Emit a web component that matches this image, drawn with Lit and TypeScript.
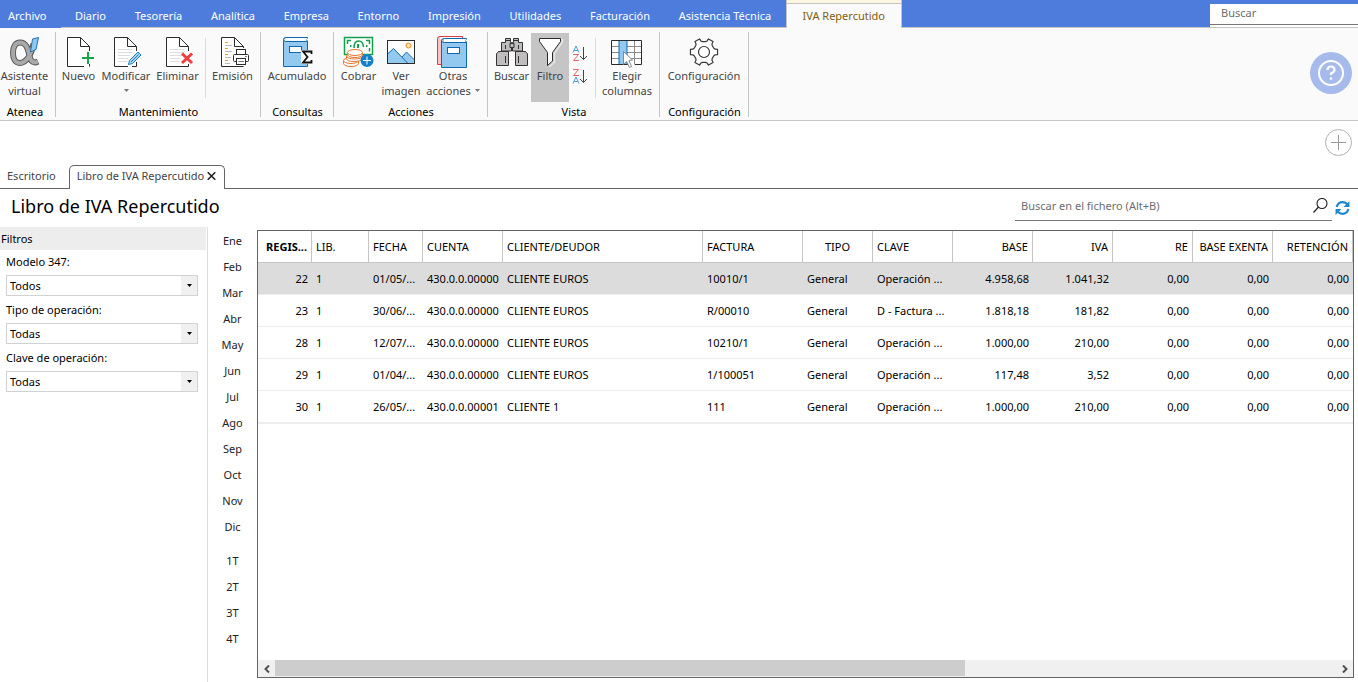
import { LitElement, html, css, svg } from "lit";
import { customElement, property, state } from "lit/decorators.js";
import { classMap } from "lit/directives/class-map.js";

const docShape = svg`
  <path d="M4.5 1.5H17.5L26.5 10.5V30.5H4.5Z" fill="#fff"/>
  <path d="M17.5 1.5V10.5H26.5" fill="none" stroke="#2b2b2b"/>`;
const docLines = svg`<path d="M8 13.5H22M8 16.5H22M8 19.5H20M8 22.5H18M8 25.5H17" stroke="#dcdcdc"/>`;

/* Outline of a six-toothed cog around (16, 16). */
const cog = (() => {
  const points: string[] = [];
  for (let tooth = 0; tooth < 6; tooth++) {
    for (const [offset, r] of [[-21, 10.5], [-14, 11.5], [-11, 13.8], [11, 13.8], [14, 11.5], [21, 10.5]]) {
      const a = ((tooth * 60 + offset) * Math.PI) / 180;
      points.push(`${(16 + r * Math.cos(a)).toFixed(2)} ${(16 + r * Math.sin(a)).toFixed(2)}`);
    }
  }
  return `M${points.join("L")}Z`;
})();

const alphaPath = "M24.5 7.500C23 17 18 27 10.500 27C6.500 27 4 23 4 17C4 10.500 6.500 6.500 11 6.500C18 6.500 19 14 21 21.500C22.200 26 25 27.500 29 25.500";

const icons: Record<string, unknown> = {
  alpha: svg`
    <path d=${alphaPath} fill="none" stroke="#5a5a5a" stroke-width="6"/>
    <path d=${alphaPath} fill="none" stroke="#a9a9a9" stroke-width="4"/>
    <path d="M23.500 3L29.500 1.500L27 13.500L21.500 16Z" fill="#8fc6f0" stroke="#1f74b8"/>`,
  nuevo: svg`
    <path d="M4.500 1.500H17.500L26.500 10.500V30.500H4.500Z" fill="#fff"/>
    <path d="M21 30.500H4.500V1.500H17.500L26.500 10.500V15M17.500 1.500V10.500H26.500M26.500 28V30.500" fill="none" stroke="#2b2b2b"/>
    <path d="M19 22H31M25 16V28" stroke="#14a84b" stroke-width="2"/>`,
  modificar: svg`
    <path d="M4.500 1.500H17.500L26.500 10.500V30.500H4.500Z" fill="#fff"/>${docLines}
    <path d="M18 30.500H4.500V1.500H17.500L26.500 10.500V15M17.500 1.500V10.500H26.500M26.500 26V30.500H22" fill="none" stroke="#2b2b2b"/>
    <path d="M18.500 28.500L19.500 24.500L28 16L31 19L22.500 27.500Z" fill="#a5d3f5" stroke="#1f7fc4" stroke-linejoin="round"/>
    <path d="M21 26L28.500 18.500" stroke="#1f7fc4"/>`,
  eliminar: svg`
    <path d="M4.500 1.500H17.500L26.500 10.500V30.500H4.500Z" fill="#fff"/>${docLines}
    <path d="M26.500 15V10.500L17.500 1.500H4.500V30.500H26.500V28M17.500 1.500V10.500H26.500" fill="none" stroke="#2b2b2b"/>
    <path d="M20 17.500L30 27M30 17.500L20 27" stroke="#ef3e3e" stroke-width="3"/>`,
  emision: svg`${docShape}
    <path d="M26.500 30.500H4.500V1.500H17.500L26.500 10.500V12" fill="none" stroke="#2b2b2b"/>
    <path d="M8 6.500H11M8 12.500H11M8 18.500H11M8 24.500H11" stroke="#f39a1e"/>
    <path d="M8 9.500H15M8 15.500H15M8 21.500H14M8 27.500H13" stroke="#bbb"/>
    <rect x="16.500" y="18.500" width="15" height="7" rx="1" fill="#fff" stroke="#2b2b2b"/>
    <rect x="19.500" y="13.500" width="9" height="5" fill="#fff" stroke="#2b2b2b"/>
    <rect x="19.500" y="22.500" width="9" height="6" fill="#fff" stroke="#2b2b2b"/>
    <path d="M21.500 25.500H27M28 20.500H30" stroke="#777"/>`,
  acumulado: svg`
    <path d="M2.500 3.500V30.500H26.500V5.500H5Q2.500 5.500 2.500 3.500T5 1.500H26.500L25.500 3.500L26.500 5.500" fill="#94c9ef" stroke="#1068b0"/>
    <path d="M4.500 2H26L25 5H4.500Z" fill="#fff"/>
    <rect x="8.500" y="10.500" width="12" height="6" fill="#fff" stroke="#1068b0"/>
    <path d="M20 14H32V28H20Z" fill="#fafafa"/>
    <path d="M30.500 18V15.500H22L26.500 21L22 26.500H30.500V24" fill="none" stroke="#111" stroke-width="1.800"/>`,
  cobrar: svg`
    <rect x="1.500" y="1.500" width="28" height="17" fill="#fff" stroke="#11a14a" stroke-width="1.500"/>
    <path d="M4.500 8V4.500H8M23 4.500H26.500V8M26.500 12V15.500" fill="none" stroke="#11a14a" stroke-width="1.500"/>
    <path d="M11 12Q11 5 15.500 5T20.500 11" fill="none" stroke="#11a14a" stroke-width="1.500"/>
    <path d="M7 10H8.500M23 10H24.500M15 8V12" stroke="#11a14a" stroke-width="2"/>
    <g fill="#fff" stroke="#e8762d">
      <path d="M.5 24.500V27.500Q1.500 30.500 8 30.500T15.500 27.500V24.500"/><ellipse cx="8" cy="24.500" rx="7.500" ry="3"/>
      <path d="M3.500 20V22.500Q4 25.500 11 25.500T19.500 22.500V20"/><ellipse cx="11.500" cy="20" rx="8" ry="3"/>
      <path d="M4.500 16.500V18.500Q5.500 21.500 12 21.500T19.500 18.500V16.500"/><ellipse cx="12" cy="16.500" rx="7.500" ry="3"/>
    </g>
    <circle cx="24" cy="24.500" r="6.500" fill="#157fcb"/>
    <path d="M20 24.500H28M24 20.500V28.500" stroke="#fff"/>`,
  imagen: svg`
    <rect x="2.500" y="4.500" width="27" height="23" fill="#fff"/>
    <path d="M3 17.500L8.500 12.500L17 21L21.500 16L29 24V27H3Z" fill="#94c9ef"/>
    <path d="M3 17.500L8.500 12.500L22.500 27M17 21L21.500 16L29.500 24" fill="none" stroke="#1068b0"/>
    <circle cx="23.500" cy="9.500" r="2.500" fill="#ffe3a8" stroke="#ee8a2c"/>
    <rect x="2.500" y="4.500" width="27" height="23" fill="none" stroke="#2b2b2b"/>`,
  otras: svg`
    <path d="M25.500 .5H3Q.5 .5 .5 2.500V28.500H8V4H25.500Z" fill="#f8c3c3" stroke="#e23a42"/>
    <path d="M3 1H25V3.500H3Z" fill="#fff"/>
    <path d="M4.500 4.500V31.500H29.500V6.500H7.500Q4.500 6.500 4.500 4.500T7.500 2.500H29.500L28.500 4.500L29.500 6.500" fill="#94c9ef" stroke="#1068b0"/>
    <path d="M7 3H29L28 6H7Z" fill="#fff"/>
    <rect x="10.500" y="11.500" width="12" height="6" fill="#fff" stroke="#1068b0"/>`,
  buscar: svg`
    <g fill="#bfbdbd" stroke="#333">
      <path d="M5.500 15V6.500H9.500V2.500H14.500V6.500H15.500V15ZM16.500 15V6.500H17.500V2.500H22.500V6.500H26.500V15Z"/>
      <path d="M2.500 15.500H12.500V29.500H.5V18ZM19.500 15.500H29.500L31.500 18V29.500H19.500Z"/>
      <path d="M14 7.500H18V11.500H14Z"/>
    </g>
    <path d="M9.500 9V13M22.500 9V13M9.500 20V27M22.500 20V27M10 4.500H14M18 4.500H22" stroke="#333"/>`,
  filtro: svg`
    <path d="M5.500 3.500H28.500V6L20.500 17V26.500L15 31" fill="none" stroke="#e6e6e6" stroke-width="1.500"/>
    <path d="M5.500 2.500H26.500V5.500L18.500 16.500V25L13.500 29.500V16.500L5.500 5.500Z" fill="#fff" stroke="#2b2b2b"/>`,
  elegir: svg`
    <rect x="1" y="4.500" width="30" height="24" fill="#fff"/>
    <path d="M.5 10.500H30.500M.5 16.500H30.500M.5 22.500H30.500M15.500 4.500V28.500M23.500 4.500V28.500" stroke="#8b8b8b"/>
    <rect x="8" y="4.500" width="8" height="24" fill="#94c9ef"/>
    <path d="M8 4V29M16 4V29" stroke="#1068b0"/>
    <path d="M18 28.500H.5V4.500H30.500V28.500H24" fill="none" stroke="#2b2b2b"/>
    <path d="M12.500 15.500V28.500L15.500 25.500L18.500 31.500L20.500 30.500L18 24.500L21.500 24Z" fill="#fff" stroke="#888" stroke-linejoin="round"/>`,
  config: svg`
    <path d=${cog} fill="#fff" stroke="#3a3a3a" stroke-width="1.200" stroke-linejoin="round"/>
    <circle cx="16" cy="16" r="5.500" fill="none" stroke="#3a3a3a" stroke-width="1.200"/>`,
};

interface Action {
  icon: string;
  lines: string[];
  arrow?: boolean;
  on?: boolean;
}

@customElement("ribbon-button")
class RibbonButton extends LitElement {
  @property({ attribute: false }) action!: Action;

  static styles = css`
    :host { display: flex; }
    button {
      display: flex; flex-direction: column; align-items: center; flex: 1;
      height: 69px; padding: 3px 0 0; border: 0; background: none;
      font: 11px/15px "Noto Sans", "Open Sans", sans-serif; color: #444; white-space: nowrap;
    }
    button:hover { background: #e8e8e8; }
    .on, .on:hover { background: #c5c5c5; }
    svg { display: block; flex: none; }
    .text { display: flex; align-items: center; height: 15px; }
    .arrow { margin-left: 4px; }
    .alone { margin-left: 0; }
  `;

  render() {
    const a = this.action;
    const last = a.lines.length - 1;
    const arrow = (alone: boolean) =>
      html`<svg class=${classMap({ arrow: true, alone })} width="5" height="3" viewBox="0 0 5 3"><path d="M0 0H5L2.500 3Z" fill="#777" /></svg>`;
    return html`<button class=${classMap({ on: !!a.on })}>
      <svg width="32" height="32" viewBox="0 0 32 32">${icons[a.icon]}</svg>
      ${a.lines.map((l, i) => html`<span class="text">${l}${a.arrow && last > 0 && i === last ? arrow(false) : ""}</span>`)}
      ${a.arrow && last === 0 ? html`<span class="text">${arrow(true)}</span>` : ""}
    </button>`;
  }
}

const menu = ["Diario", "Tesorería", "Analítica", "Empresa", "Entorno", "Impresión", "Utilidades", "Facturación", "Asistencia Técnica"];
const months = ["Ene", "Feb", "Mar", "Abr", "May", "Jun", "Jul", "Ago", "Sep", "Oct", "Nov", "Dic"];
const quarters = ["1T", "2T", "3T", "4T"];
const filters = [
  { id: "modelo", label: "Modelo 347:", value: "Todos" },
  { id: "tipo", label: "Tipo de operación:", value: "Todas" },
  { id: "clave", label: "Clave de operación:", value: "Todas" },
];
const columns = [
  { title: "REGIS...", width: 54, align: "right strong" },
  { title: "LIB.", width: 57, align: "" },
  { title: "FECHA", width: 54, align: "" },
  { title: "CUENTA", width: 80, align: "" },
  { title: "CLIENTE/DEUDOR", width: 200, align: "" },
  { title: "FACTURA", width: 100, align: "" },
  { title: "TIPO", width: 70, align: "mid" },
  { title: "CLAVE", width: 80, align: "" },
  { title: "BASE", width: 80, align: "right" },
  { title: "IVA", width: 80, align: "right" },
  { title: "RE", width: 80, align: "right" },
  { title: "BASE EXENTA", width: 80, align: "right" },
  { title: "RETENCIÓN", width: 80, align: "right" },
];
const rows = [
  ["22", "1", "01/05/...", "430.0.0.00000", "CLIENTE EUROS", "10010/1", "General", "Operación ...", "4.958,68", "1.041,32", "0,00", "0,00", "0,00"],
  ["23", "1", "30/06/...", "430.0.0.00000", "CLIENTE EUROS", "R/00010", "General", "D - Factura ...", "1.818,18", "181,82", "0,00", "0,00", "0,00"],
  ["28", "1", "12/07/...", "430.0.0.00000", "CLIENTE EUROS", "10210/1", "General", "Operación ...", "1.000,00", "210,00", "0,00", "0,00", "0,00"],
  ["29", "1", "01/04/...", "430.0.0.00000", "CLIENTE EUROS", "1/100051", "General", "Operación ...", "117,48", "3,52", "0,00", "0,00", "0,00"],
  ["30", "1", "26/05/...", "430.0.0.00001", "CLIENTE 1", "111", "General", "Operación ...", "1.000,00", "210,00", "0,00", "0,00", "0,00"],
];

@customElement("app-root")
class AppRoot extends LitElement {
  @state() private selected = 0;

  static styles = css`
    :host {
      display: flex; flex-direction: column; min-height: 100vh; background: #fff;
      font: 11px/15px "Noto Sans", "Open Sans", sans-serif; color: #000;
    }
    *, *::before, *::after { box-sizing: border-box; }
    button, input, select { font: inherit; color: inherit; border: 0; background: none; padding: 0; margin: 0; border-radius: 0; }
    a { color: inherit; text-decoration: none; }
    input { outline: 0; min-width: 0; }
    input::placeholder { color: #6d6d6d; opacity: 1; }
    svg { display: block; flex: none; }

    .menubar { display: flex; height: 28px; background: #4d7cdc; border-bottom: 1px solid #c5c5c5; color: #fff; text-align: center; white-space: nowrap; }
    .menubar a { padding-top: 8px; }
    .menubar .file { height: 28px; padding: 8px 14px 0 8px; background: #4d7cdc; }
    .menu { display: flex; width: 725px; }
    .menu a { flex: 1 0 auto; padding: 8px 14px 0; }
    .menubar .current { height: 28px; padding: 8px 16px 0; color: #80600f; background: #fafafa; border: solid #c5c5c5; border-width: 0 1px; box-shadow: inset 0 3px #fdf6e0, inset 0 4px #c5c5c5; }
    .find { margin: 4px 0 0 auto; width: 148px; background: #fff; height: 23px; }
    .find input { display: block; width: 100%; height: 21px; padding: 0 11px 4px; border-bottom: 1px solid #767676; }

    .ribbon { display: flex; height: 93px; padding: 4px 0 3px; background: #fafafa; border-bottom: 1px solid #c5c5c5; }
    .group { display: flex; flex-direction: column; border-right: 1px solid #c5c5c5; padding-top: 1px; }
    .group:first-child { padding-right: 6px; }
    .tools { display: flex; flex: 1; justify-content: center; }
    .tools i { width: 1px; height: 60px; margin: 5px 3px 0 4px; background: #dcdcdc; }
    .caption { text-align: center; height: 15px; margin-bottom: -2px; padding-left: 1px; }
    .sorts { display: flex; flex-direction: column; width: 22px; padding: 12px 0 0 3px; gap: 5px; }
    .help { align-self: center; margin: 0 6px 4px auto; border-radius: 50%; }

    .docbar { display: flex; align-items: flex-end; height: 68px; border-bottom: 1px solid #646464; color: #444; }
    .docbar .tab { height: 23px; padding: 3px 13px 0 7px; }
    .docbar .open { display: flex; align-items: flex-start; gap: 3px; height: 24px; margin-bottom: -1px; padding: 2px 8px 0 7px; background: #fff; border: 1px solid #646464; border-bottom: 0; border-radius: 5px 5px 0 0; }
    .docbar .open svg { margin-top: 4px; }
    .docbar .add { margin: 0 6px 32px auto; }

    .head { display: flex; align-items: flex-start; height: 38px; padding-right: 8px; }
    h1 { margin: 5px 0 0 11px; font-size: 18px; line-height: 24px; font-weight: 400; }
    .search { display: flex; align-items: center; width: 317px; height: 32px; margin-left: auto; padding: 2px 4px 0 6px; border-bottom: 1px solid #767676; }
    .search input { flex: 1; height: 20px; padding-bottom: 1px; }
    .refresh { margin: 12px 0 0 3px; }

    .work { display: flex; flex: 1; }
    .filters { width: 208px; border-right: 1px solid #dcdcdc; padding-right: 1px; }
    h2 { margin: 0; padding: 4px 1px; font-size: 11px; line-height: 15px; font-weight: 400; background: #ededed; }
    .field { display: flex; flex-direction: column; gap: 1px; padding: 0 8px 2px 6px; }
    .field label { line-height: 24px; }
    .combo { display: grid; }
    .combo > * { grid-area: 1 / 1; }
    .combo select { appearance: none; height: 21px; border: 1px solid #d2d2d2; padding: 0 20px 0 3px; background: linear-gradient(#f0f0f0, #f0f0f0) right / 16px no-repeat #fff; }
    .combo svg { justify-self: end; align-self: center; margin-right: 6px; pointer-events: none; }
    .periods { display: flex; flex-direction: column; width: 49px; color: #222; }
    .periods button { height: 26px; }
    .periods .first { margin-top: 8px; }

    .grid { display: flex; flex-direction: column; flex: 1; min-width: 0; margin: 3px 4px 4px 0; border: 1px solid #646464; }
    .scroll { flex: 1; overflow: hidden; }
    table { width: 100%; table-layout: fixed; border-collapse: separate; border-spacing: 0; border-bottom: 1px solid #eee; }
    th, td { height: 32px; padding: 0 4px; text-align: left; font-weight: 400; white-space: nowrap; line-height: 16px; border-bottom: 1px solid #eee; }
    th { border-right: 1px solid #c5c5c5; border-bottom-color: #c5c5c5; }
    td { padding-right: 0; }
    td.right { padding-right: 4px; }
    th.right, td.right { text-align: right; }
    th.mid { text-align: center; }
    th.strong { font-weight: 700; }
    .selected td { background: #dcdcdc; }
    .hbar { display: flex; height: 17px; background: #f0f0f0; }
    .hbar button { display: grid; place-items: center; width: 17px; }
    .track { flex: 1; }
    .thumb { width: 65%; height: 16px; background: #cdcdcd; }
  `;

  private tool(icon: string, size: number, lines: string[], extra: Partial<Action> = {}) {
    const action: Action = { icon, lines, ...extra };
    return html`<ribbon-button style="width:${size}px" .action=${action}></ribbon-button>`;
  }

  private group(caption: string, width: number, tools: unknown) {
    return html`<section class="group" style="width:${width}px">
      <div class="tools">${tools}</div>
      <div class="caption">${caption}</div>
    </section>`;
  }

  private sortIcon(desc: boolean) {
    const a = (y: number) => svg`<path d="M1 ${y + 6.5}L4 ${y}L7 ${y + 6.5}M2 ${y + 4.5}H6" fill="none" stroke="#4a9fd8" />`;
    const z = (y: number) => svg`<path d="M1 ${y + 0.5}H6.500L1.500 ${y + 6.5}H7" fill="none" stroke="#e8666a" />`;
    return html`<button aria-label=${desc ? "Orden descendente" : "Orden ascendente"}>
      <svg width="17" height="18" viewBox="0 0 17 18">
        ${desc ? [z(1), a(9)] : [a(1), z(9)]}
        <path d="M11.500 2V14.500M8 11L11.500 14.500L15 11" fill="none" stroke="#444" />
      </svg>
    </button>`;
  }

  render() {
    return html`
      <nav class="menubar">
        <a class="file" href="#">Archivo</a>
        <div class="menu">${menu.map((m) => html`<a href="#">${m}</a>`)}</div>
        <a class="current" href="#">IVA Repercutido</a>
        <div class="find"><input type="text" placeholder="Buscar" aria-label="Buscar" /></div>
      </nav>

      <div class="ribbon">
        ${this.group("Atenea", 56, this.tool("alpha", 49, ["Asistente", "virtual"]))}
        ${this.group("Mantenimiento", 205, html`
          ${this.tool("nuevo", 38, ["Nuevo"])}
          ${this.tool("modificar", 57, ["Modificar"], { arrow: true })}
          ${this.tool("eliminar", 46, ["Eliminar"])}
          <i></i>
          ${this.tool("emision", 48, ["Emisión"])}`)}
        ${this.group("Consultas", 73, this.tool("acumulado", 62, ["Acumulado"]))}
        ${this.group("Acciones", 154, html`
          ${this.tool("cobrar", 43, ["Cobrar"])}
          ${this.tool("imagen", 42, ["Ver", "imagen"])}
          ${this.tool("otras", 62, ["Otras", "acciones"], { arrow: true })}`)}
        ${this.group("Vista", 172, html`
          ${this.tool("buscar", 39, ["Buscar"])}
          ${this.tool("filtro", 38, ["Filtro"], { on: true })}
          <div class="sorts">${this.sortIcon(false)}${this.sortIcon(true)}</div>
          <i></i>
          ${this.tool("elegir", 56, ["Elegir", "columnas"])}`)}
        ${this.group("Configuración", 89, this.tool("config", 80, ["Configuración"]))}
        <button class="help" aria-label="Ayuda">
          <svg width="42" height="42" viewBox="0 0 42 42">
            <circle cx="21" cy="21" r="21" fill="#a6bbec" />
            <circle cx="21" cy="21" r="12" fill="none" stroke="#fff" stroke-width="2" />
            <path d="M17.500 18Q17.500 14.500 21 14.500T24.500 18Q24.500 20 21 21.500V23" fill="none" stroke="#fff" stroke-width="2.200" />
            <circle cx="21" cy="26.500" r="1.300" fill="#fff" />
          </svg>
        </button>
      </div>

      <div class="docbar">
        <a class="tab" href="#">Escritorio</a>
        <div class="open">
          <a href="#">Libro de IVA Repercutido</a>
          <button aria-label="Cerrar">
            <svg width="9" height="8" viewBox="0 0 9 8"><path d="M.7 .3L8.300 7.700M8.300 .3L.7 7.700" stroke="#222" stroke-width="1.600" /></svg>
          </button>
        </div>
        <button class="add" aria-label="Añadir">
          <svg width="27" height="27" viewBox="0 0 27 27">
            <circle cx="13.500" cy="13.500" r="13" fill="none" stroke="#b0b0b0" />
            <path d="M6 13.500H21M13.500 6V21" stroke="#999" />
          </svg>
        </button>
      </div>

      <header class="head">
        <h1>Libro de IVA Repercutido</h1>
        <div class="search">
          <input type="text" placeholder="Buscar en el fichero (Alt+B)" aria-label="Buscar en el fichero" />
          <svg width="15" height="15" viewBox="0 0 15 15">
            <circle cx="9" cy="5.500" r="5" fill="none" stroke="#222" stroke-width="1.100" />
            <path d="M5.500 9L.5 14.500" stroke="#222" stroke-width="1.200" />
          </svg>
        </div>
        <button class="refresh" aria-label="Actualizar">
          <svg width="15" height="14" viewBox="0 0 14 13">
            <path d="M1.500 5.500C2.500 2 4.500 1 7 1Q9.500 1 11.500 3M12.500 7.500C11.500 11 9.500 12 7 12Q4.500 12 2.500 10" fill="none" stroke="#1f87cf" stroke-width="2" />
            <path d="M13.500 0V5.500H8ZM.5 13V7.500H6Z" fill="#1f87cf" />
          </svg>
        </button>
      </header>

      <main class="work">
        <aside class="filters">
          <h2>Filtros</h2>
          ${filters.map((f) => html`
            <div class="field">
              <label for=${f.id}>${f.label}</label>
              <div class="combo">
                <select id=${f.id}><option>${f.value}</option></select>
                <svg width="5" height="3" viewBox="0 0 5 3"><path d="M0 0H5L2.500 3Z" fill="#000" /></svg>
              </div>
            </div>`)}
        </aside>
        <div class="periods">
          ${months.map((m) => html`<button>${m}</button>`)}
          ${quarters.map((q, i) => html`<button class=${classMap({ first: i === 0 })}>${q}</button>`)}
        </div>
        <section class="grid">
          <div class="scroll">
            <table>
              <colgroup>${columns.map((c) => html`<col style="width:${c.width}px" />`)}</colgroup>
              <thead><tr>${columns.map((c) => html`<th class=${c.align}>${c.title}</th>`)}</tr></thead>
              <tbody>
                ${rows.map((r, i) => html`
                  <tr class=${classMap({ selected: i === this.selected })} @click=${() => (this.selected = i)}>
                    ${r.map((v, j) => html`<td class=${columns[j].align.split(" ")[0]}>${v}</td>`)}
                  </tr>`)}
              </tbody>
            </table>
          </div>
          <div class="hbar">
            <button aria-label="Izquierda"><svg width="6" height="8" viewBox="0 0 6 8"><path d="M5 .5L1.500 4L5 7.500" fill="none" stroke="#505050" stroke-width="2" /></svg></button>
            <div class="track"><div class="thumb"></div></div>
            <button aria-label="Derecha"><svg width="6" height="8" viewBox="0 0 6 8"><path d="M1 .5L4.500 4L1 7.500" fill="none" stroke="#505050" stroke-width="2" /></svg></button>
          </div>
        </section>
      </main>
    `;
  }
}
